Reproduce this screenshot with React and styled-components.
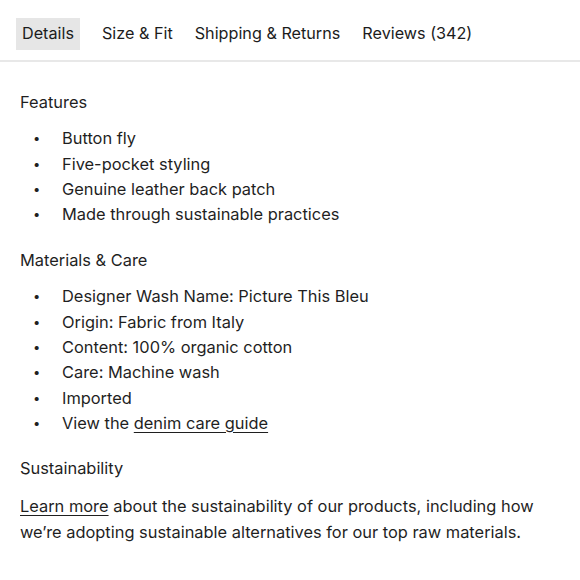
import styled, { createGlobalStyle } from "styled-components"

const Global = createGlobalStyle`
    body {
        margin: 0;
        background: #fff;
        font-family: "Inter", "Liberation Sans", sans-serif;
        color: #1f1f1f;
    }
`

const tabs = ["Details", "Size & Fit", "Shipping & Returns", "Reviews (342)"]

const features = [
    "Button fly",
    "Five-pocket styling",
    "Genuine leather back patch",
    "Made through sustainable practices",
]

const materials = [
    "Designer Wash Name: Picture This Bleu",
    "Origin: Fabric from Italy",
    "Content: 100% organic cotton",
    "Care: Machine wash",
    "Imported",
]

export default function App() {
    return (
        <Wrapper>
            <Global />
            <TabBar>
                {tabs.map((t, i) => (
                    <Tab key={t} $active={i === 0}>{t}</Tab>
                ))}
            </TabBar>
            <Content>
                <Heading>Features</Heading>
                <List>
                    {features.map(f => <Item key={f}>{f}</Item>)}
                </List>
                <Heading>Materials &amp; Care</Heading>
                <List>
                    {materials.map(m => <Item key={m}>{m}</Item>)}
                    <Item><span>View the <Link href="#">denim care guide</Link></span></Item>
                </List>
                <Heading>Sustainability</Heading>
                <Paragraph>
                    <Link href="#">Learn more</Link> about the sustainability of our products, including how
                    we’re adopting sustainable alternatives for our top raw materials.
                </Paragraph>
            </Content>
        </Wrapper>
    )
}

const Wrapper = styled.section`
    width: 580px;
    font-size: 16.4px;
    line-height: 25.35px;
`

const TabBar = styled.nav`
    display: flex;
    align-items: center;
    gap: 22px;
    padding: 18px 16px 10px;
    border-bottom: 2px solid #e8e8e8;
`

const Tab = styled.div`
    padding: 3px ${p => (p.$active ? "6px" : "0")};
    font-size: 16.2px;
    line-height: 25.6px;
    background: ${p => (p.$active ? "#e6e6e6" : "transparent")};
    color: #1c1c1c;
`

const Content = styled.div`
    padding: 28px 20px 0;
`

const Heading = styled.h3`
    margin: 0 0 11px;
    font-weight: 400;
    font-size: 16.4px;
    line-height: 25.6px;
`

const List = styled.ul`
    margin: 0 0 20px;
    padding: 0 0 0 13px;
    list-style: none;
`

const Item = styled.li`
    display: flex;
    line-height: 25.35px;
    &::before {
        content: "•";
        flex: 0 0 29px;
        font-size: 13px;
    }
`

const Link = styled.a`
    color: inherit;
    text-decoration: underline;
    text-underline-offset: 3px;
`

const Paragraph = styled.p`
    margin: 9px 0 0;
    line-height: 26px;
`
